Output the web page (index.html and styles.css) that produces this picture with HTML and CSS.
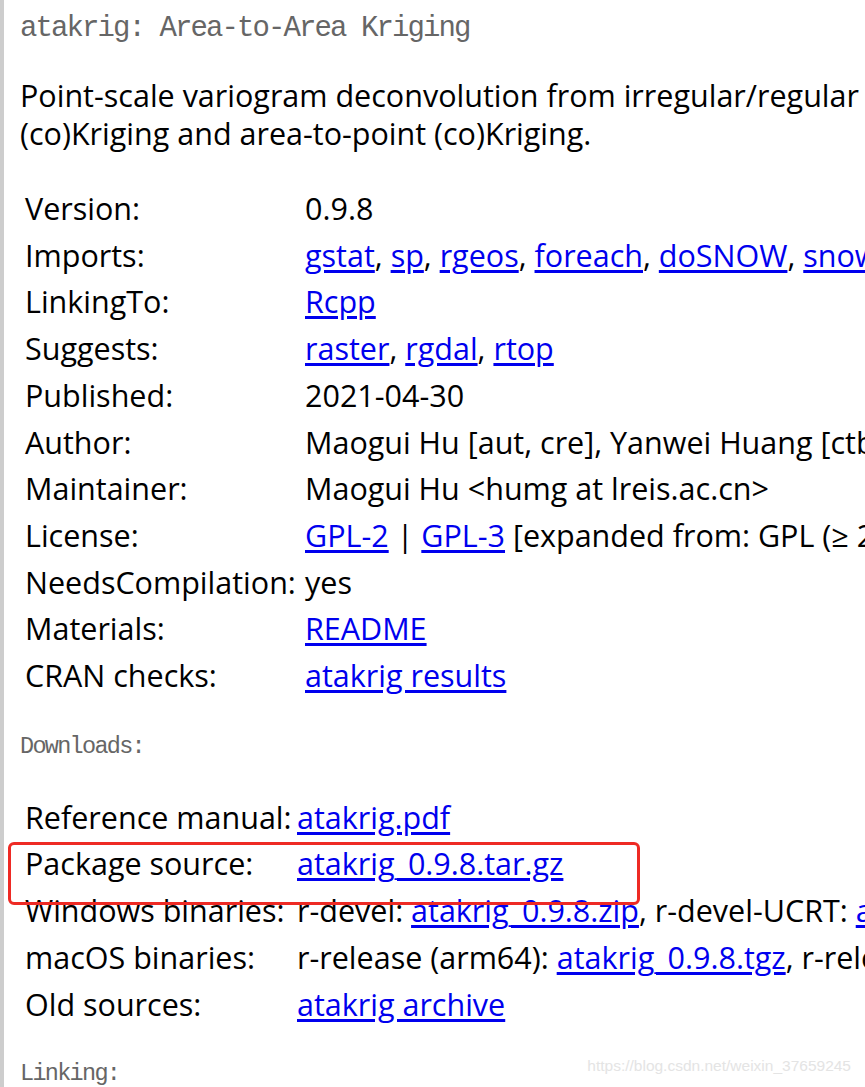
FILE: index.html
```html
<!DOCTYPE html>
<html>
<head>
<meta charset="utf-8">
<title>CRAN - Package atakrig</title>
<link rel="stylesheet" href="styles.css">
</head>
<body>
<div class="page">
  <h2 class="title">atakrig: Area-to-Area Kriging</h2>
  <p class="desc">Point-scale variogram deconvolution from irregular/regular spatial support, according to Goovaerts, P., (2008); ordinary area-to-area<br>(co)Kriging and area-to-point (co)Kriging.</p>

  <div class="info info-main">
    <div class="lbl">Version:</div><div class="val">0.9.8</div>
    <div class="lbl">Imports:</div><div class="val"><a href="#">gstat</a>, <a href="#">sp</a>, <a href="#">rgeos</a>, <a href="#">foreach</a>, <a href="#">doSNOW</a>, <a href="#">snow</a>, <a href="#">FNN</a>, <a href="#">Rcpp</a></div>
    <div class="lbl">LinkingTo:</div><div class="val"><a href="#">Rcpp</a></div>
    <div class="lbl">Suggests:</div><div class="val"><a href="#">raster</a>, <a href="#">rgdal</a>, <a href="#">rtop</a></div>
    <div class="lbl">Published:</div><div class="val">2021-04-30</div>
    <div class="lbl">Author:</div><div class="val">Maogui Hu [aut, cre], Yanwei Huang [ctb]</div>
    <div class="lbl">Maintainer:</div><div class="val">Maogui Hu &lt;humg at lreis.ac.cn&gt;</div>
    <div class="lbl">License:</div><div class="val"><a href="#">GPL-2</a> | <a href="#">GPL-3</a> [expanded from: GPL (≥ 2)]</div>
    <div class="lbl">NeedsCompilation:</div><div class="val">yes</div>
    <div class="lbl">Materials:</div><div class="val"><a href="#">README</a></div>
    <div class="lbl">CRAN checks:</div><div class="val"><a href="#">atakrig results</a></div>
  </div>

  <h4 class="section">Downloads:</h4>

  <div class="info info-dl">
    <div class="lbl">Reference manual:</div><div class="val"><a href="#">atakrig.pdf</a></div>
    <div class="lbl">Package source:</div><div class="val"><a href="#">atakrig_0.9.8.tar.gz</a></div>
    <div class="lbl">Windows binaries:</div><div class="val">r-devel: <a href="#">atakrig_0.9.8.zip</a>, r-devel-UCRT: <a href="#">atakrig_0.9.8.zip</a>, r-release: <a href="#">atakrig_0.9.8.zip</a></div>
    <div class="lbl">macOS binaries:</div><div class="val">r-release (arm64): <a href="#">atakrig_0.9.8.tgz</a>, r-release (x86_64): <a href="#">atakrig_0.9.8.tgz</a></div>
    <div class="lbl">Old sources:</div><div class="val"><a href="#">atakrig archive</a></div>
  </div>

  <h4 class="section section-last">Linking:</h4>

  <div class="mark"></div>
  <div class="watermark">https://blog.csdn.net/weixin_37659245</div>
</div>
</body>
</html>
```

FILE: styles.css
```css
html, body {
  margin: 0;
  padding: 0;
  background: #ffffff;
  overflow: hidden;
}

.page {
  position: relative;
  height: 1087px;
  border-left: 4px solid #cdcdcd;
  padding-left: 16px;
  font-family: "Open Sans", "Noto Sans", sans-serif;
  font-size: 30.5px;
  color: #000;
  white-space: nowrap;
}

.title {
  margin: 0;
  padding-top: 4px;
  height: 50px;
  line-height: 50px;
  font-family: "Liberation Mono", monospace;
  font-weight: normal;
  font-size: 29px;
  letter-spacing: -1.9px;
  color: #666666;
}

.desc {
  margin: 22px 0 0 0;
  line-height: 38px;
}

.info {
  display: grid;
  padding-left: 5px;
  line-height: 46.7px;
}

.info-main {
  margin-top: 33px;
  grid-template-columns: 280px auto;
}

.info-dl {
  margin-top: 24px;
  grid-template-columns: 272px auto;
}

a {
  color: #0000ee;
  text-decoration: underline;
  text-underline-offset: 3px;
}

.section {
  margin: 25px 0 0 0;
  line-height: 46px;
  font-family: "Liberation Mono", monospace;
  font-weight: normal;
  font-size: 23.5px;
  letter-spacing: -1.7px;
  color: #666666;
}

.section-last {
  margin-top: 24px;
}

.mark {
  position: absolute;
  left: 4px;
  top: 842px;
  width: 626px;
  height: 57px;
  border: 3px solid #ee2a24;
  border-radius: 6px;
}

.watermark {
  position: absolute;
  right: 14px;
  top: 1057px;
  font-family: "Liberation Sans", sans-serif;
  font-size: 15.5px;
  color: #e4e4e4;
}
```
